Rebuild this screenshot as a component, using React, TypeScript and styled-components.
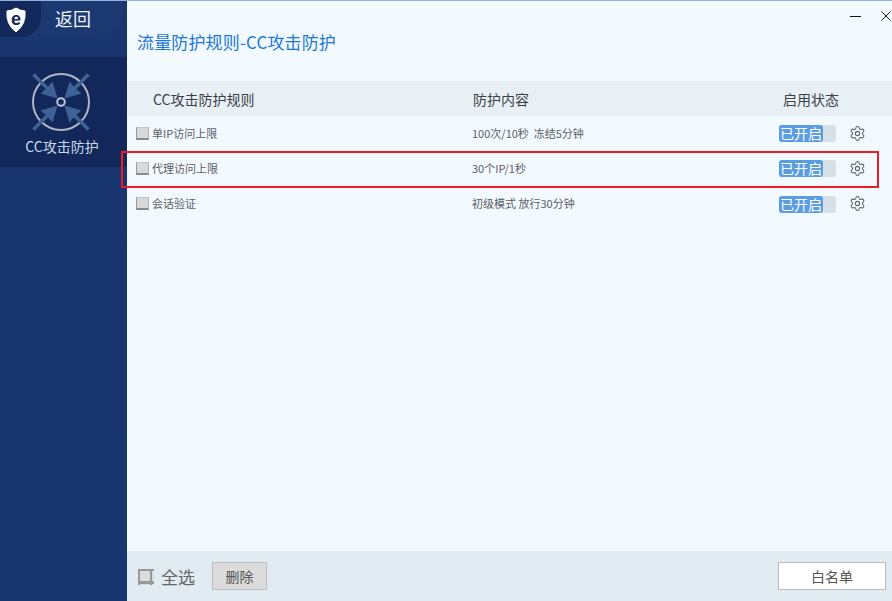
import React from "react";
import styled, { createGlobalStyle } from "styled-components";
import { Settings } from "lucide-react";

const Global = createGlobalStyle`
  html, body { margin: 0; padding: 0; width: 892px; height: 601px; overflow: hidden; }
  body { font-family: "Noto Sans CJK SC", "Noto Sans", sans-serif; }
  * { box-sizing: border-box; }
`;

const Windowed = styled.div`
  position: relative;
  display: flex;
  width: 892px;
  height: 601px;
  border-top: 1px solid #8fb3e3;
`;

const Sidebar = styled.aside`
  width: 127px;
  flex: none;
  display: flex;
  flex-direction: column;
  background: linear-gradient(180deg, #1a3670 0%, #17356f 100%);
`;

const BackBar = styled.div`
  height: 36px;
  width: 123px;
  display: flex;
  align-items: center;
  background: #1b3870;
  border-bottom-right-radius: 26px;
`;

const LogoCap = styled.div`
  width: 41px;
  height: 36px;
  flex: none;
  display: flex;
  align-items: center;
  padding-left: 5px;
  background: #13285a;
  border-bottom-right-radius: 20px;
`;

const BackLabel = styled.span`
  margin-left: 14px;
  margin-bottom: 2px;
  font-size: 18px;
  line-height: 34px;
  color: #f0f4fa;
`;

const NavItem = styled.div`
  margin-top: 20px;
  height: 110px;
  display: flex;
  flex-direction: column;
  align-items: center;
  padding: 13px 5px 0 0;
  background: #12275a;
`;

const NavLabel = styled.span`
  margin: 2px 0 0 2px;
  font-size: 14px;
  line-height: 20px;
  color: #c9d9ec;
  white-space: nowrap;
`;

const Main = styled.main`
  flex: 1;
  display: flex;
  flex-direction: column;
  min-width: 0;
  background: #f2f9ff;
`;

const TitleBar = styled.div`
  height: 80px;
  flex: none;
  display: flex;
  align-items: center;
  padding-left: 10px;
`;

const Title = styled.h1`
  margin: 0;
  font-size: 17px;
  font-weight: 400;
  letter-spacing: 0.15px;
  color: #1b78d6;
`;

const WindowButtons = styled.div`
  position: absolute;
  top: 10px;
  right: 1px;
  display: flex;
  align-items: center;
  gap: 20px;
`;

const HeaderRow = styled.div`
  height: 35px;
  flex: none;
  display: grid;
  grid-template-columns: 320px 310px 1fr;
  align-items: center;
  padding-left: 26px;
  background: #e8f0f6;
  font-size: 14px;
  color: #3a3f46;
`;

const Rows = styled.div`
  flex: 1;
`;

const RowText = styled.span`
  margin-bottom: 2px;
  white-space: pre;
`;

const RuleName = styled.div`
  display: flex;
  align-items: center;
  gap: 3px;
`;

const Row = styled.div`
  height: 35px;
  display: grid;
  grid-template-columns: 336px 307px 71px 28px;
  align-items: center;
  padding-left: 9px;
  font-size: 11px;
  color: #5c6066;
`;

const CheckBox = styled.span`
  width: 13px;
  height: 13px;
  flex: none;
  background: #d9d9d9;
  border-left: 1px solid #9a9a9a;
  border-right: 1px solid #b0b0b0;
  border-top: 1px solid #c4c4c4;
  border-bottom: 2px solid #8a8a8a;
`;

const Toggle = styled.div`
  width: 57px;
  height: 17px;
  border-radius: 3px;
  background: #d5e0e8;
  ${Row}:last-child & {
    margin-top: 2px;
  }
`;

const ToggleOn = styled.div`
  width: 44px;
  height: 17px;
  border-radius: 3px;
  background: #5a9de3;
  color: #fff;
  font-size: 14px;
  line-height: 17px;
  text-align: center;
  white-space: nowrap;
`;

const Gear = styled(Settings)`
  width: 17px;
  height: 17px;
  margin-left: -1px;
  color: #5f6368;
`;

const Footer = styled.div`
  height: 50px;
  flex: none;
  display: flex;
  align-items: center;
  padding: 0 6px 0 11px;
  background: #e1ebf2;
`;

const FooterCheck = styled.span`
  position: relative;
  width: 16px;
  height: 16px;
  flex: none;
  margin-top: 1px;
  background: #dadddd;
  border-left: 2px solid #999;
  border-top: 2px solid #999;
  &::before {
    content: "";
    position: absolute;
    right: 2px;
    top: -2px;
    bottom: 0;
    width: 2px;
    background: #999;
  }
  &::after {
    content: "";
    position: absolute;
    left: 0;
    right: 0;
    bottom: 1px;
    height: 3px;
    background: #999;
  }
`;

const SelectAll = styled.span`
  margin-left: 7px;
  font-size: 17px;
  color: #666;
`;

const DeleteButton = styled.button`
  margin-left: 17px;
  width: 55px;
  height: 28px;
  padding: 0;
  border: 1px solid #bdbdbd;
  background: #dcdcdc;
  color: #555;
  font: 14px "Noto Sans CJK SC", sans-serif;
`;

const WhiteListButton = styled.button`
  margin-left: auto;
  width: 108px;
  height: 28px;
  padding: 0;
  border: 1px solid #bdbdbd;
  background: #fff;
  color: #555;
  font: 14px "Noto Sans CJK SC", sans-serif;
`;

const Highlight = styled.div`
  position: absolute;
  left: 121px;
  top: 150px;
  width: 758px;
  height: 37px;
  border: 2px solid #ed1c24;
  pointer-events: none;
`;

const Shield = () => (
  <svg width="22" height="27" viewBox="0 0 22 27">
    <path d="M11 2 Q16 5 20 5 Q21.5 18 11 26 Q0.5 18 2 5 Q6 5 11 2 Z" fill="#fff" stroke="#fff" strokeLinejoin="round" />
    <text x="11" y="19" textAnchor="middle" fontFamily="Liberation Sans, sans-serif" fontWeight="700" fontSize="18" fill="#13285a">e</text>
  </svg>
);

const Shrink = () => (
  <svg width="64" height="64" viewBox="0 0 64 64">
    <circle cx="32" cy="32" r="28" fill="none" stroke="#aeb6c6" strokeWidth="2" />
    {[0, 90, 180, 270].map((a) => (
      <g key={a} transform={`rotate(${a} 32 32)`}>
        <path d="M4.5 4.5 L20 20" stroke="#3f6296" strokeWidth="3.5" />
        <path d="M28.6 28.6 L11.5 23.5 L18 18 L23.5 11.5 Z" fill="#3f6296" />
      </g>
    ))}
    <circle cx="32" cy="32" r="3.8" fill="none" stroke="#bcc3d0" strokeWidth="2" />
  </svg>
);

const rows = [
  ["单IP访问上限", "100次/10秒  冻结5分钟"],
  ["代理访问上限", "30个IP/1秒"],
  ["会话验证", "初级模式 放行30分钟"],
];

export default function App() {
  return (
    <>
      <Global />
      <Windowed>
        <Sidebar>
          <BackBar>
            <LogoCap><Shield /></LogoCap>
            <BackLabel>返回</BackLabel>
          </BackBar>
          <NavItem>
            <Shrink />
            <NavLabel>CC攻击防护</NavLabel>
          </NavItem>
        </Sidebar>
        <Main>
          <TitleBar><Title>流量防护规则-CC攻击防护</Title></TitleBar>
          <HeaderRow>
            <span>CC攻击防护规则</span>
            <span>防护内容</span>
            <span>启用状态</span>
          </HeaderRow>
          <Rows>
            {rows.map(([name, content]) => (
              <Row key={name}>
                <RuleName><CheckBox /><RowText>{name}</RowText></RuleName>
                <RowText>{content}</RowText>
                <Toggle><ToggleOn>已开启</ToggleOn></Toggle>
                <Gear strokeWidth={1.5} />
              </Row>
            ))}
          </Rows>
          <Footer>
            <FooterCheck />
            <SelectAll>全选</SelectAll>
            <DeleteButton>删除</DeleteButton>
            <WhiteListButton>白名单</WhiteListButton>
          </Footer>
        </Main>
        <WindowButtons>
          <svg width="11" height="3" viewBox="0 0 11 3"><path d="M0 1.5H11" stroke="#111" strokeWidth="1" /></svg>
          <svg width="10" height="10" viewBox="0 0 10 10"><path d="M0.5 0.5L9.5 9.5M9.5 0.5L0.5 9.5" stroke="#222" strokeWidth="1" /></svg>
        </WindowButtons>
        <Highlight />
      </Windowed>
    </>
  );
}
